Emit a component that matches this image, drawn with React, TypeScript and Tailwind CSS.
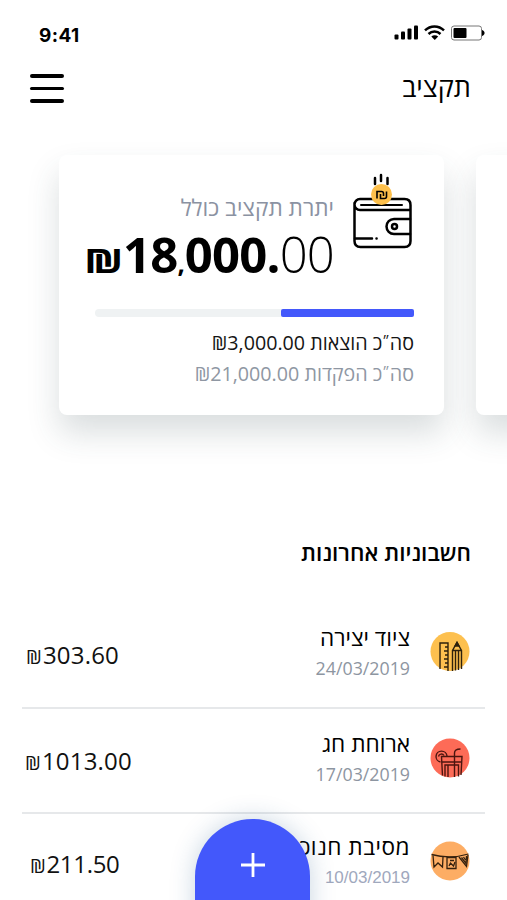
import type { ReactNode } from 'react'
import clsx from 'clsx'

type Invoice = {
  title: string
  date: string
  amount: string
  icon: ReactNode
  titleClass?: string
  dateClass: string
  amountClass: string
  rowClass: string
}

function StatusIcons() {
  return (
    <svg width="92" height="18" viewBox="0 0 92 18" fill="none">
      <g fill="#000">
        <rect x="1.5" y="10.5" width="4" height="5" rx="1" />
        <rect x="8" y="7.5" width="4" height="8" rx="1" />
        <rect x="14.5" y="4.500" width="4" height="11" rx="1" />
        <rect x="21" y="1.500" width="4" height="14" rx="1" />
      </g>
      <g stroke="#000" strokeWidth="2.5">
        <path d="M32 6.300c5.400-5.200 13.600-5.200 19 0" />
        <path d="M35.500 10c3.400-3.200 8.600-3.200 12 0" />
      </g>
      <path d="M38.300 12.500c2-1.600 4.900-1.600 6.900 0L41.750 16z" fill="#000" />
      <rect x="58.500" y="2" width="30" height="14" rx="2.500" stroke="#777" />
      <rect x="60.500" y="4" width="13" height="10" rx="1" fill="#000" />
      <path d="M89 6c3.400 1 3.400 5 0 6z" fill="#000" />
    </svg>
  )
}

function WalletIcon() {
  return (
    <svg width="60" height="76" viewBox="0 0 60 76" fill="none" stroke="#000" strokeWidth="2.500" strokeLinecap="round">
      <path d="M23 5v6M29 2v6M35.500 5v6" />
      <path d="M2.500 30v38q0 6 6 6h44q6 0 6-6V32q0-6-6-6H8a5.500 5.500 0 0 0 0 11h50" />
      <path d="M9 32h41" strokeWidth="2" />
      <path d="M58 46H42a7.500 7.500 0 0 0 0 15h16" />
      <circle cx="42.500" cy="53.500" r="2.500" />
      <path d="M3 65.500h17M24.500 65.500h.1" />
      <circle cx="29.500" cy="21.500" r="10.500" fill="#fdc04c" stroke="none" />
      <path d="M25 25.500v-7h4.500q2 0 2 2v2.500M28.500 21v4.500h4q2 0 2-2v-5" strokeWidth="1.600" strokeLinecap="butt" />
    </svg>
  )
}

function PencilIcon() {
  return (
    <svg width="40" height="40" viewBox="0 0 40 40" fill="none" stroke="#2e210c" strokeWidth="1.400">
      <circle cx="20" cy="19.500" r="19.500" fill="#fdc04f" stroke="none" />
      <path d="M10 37V11h8v28M18 15h-3M18 19h-4M18 23h-3M18 27h-4M18 31h-3M18 35h-4" />
      <path d="M22.500 39V18.500l4.500-8 4.500 8v18.500M22.500 18.500h9M25.500 19v19.500M28.500 19v19" />
      <path d="M25 14l2-3.500 2 3.500z" fill="#2e210c" />
    </svg>
  )
}

function DrinkIcon() {
  return (
    <svg width="40" height="40" viewBox="0 0 40 40" fill="none" stroke="#4c150f" strokeWidth="1.400">
      <circle cx="20" cy="20" r="19.500" fill="#fd6b57" stroke="none" />
      <path d="M10.500 24a5.500 5.500 0 1 1 6.500-6M8.500 18.500a3 3 0 0 1 5.500-1" />
      <path d="M12.500 37.500l-1-19h20.500l-1 18.500M12 24h19.500M15 38.500V27h13.500v11.500M18 39V27M24.500 39V15q0-4 6-4" />
    </svg>
  )
}

function BuntingIcon() {
  return (
    <svg width="40" height="40" viewBox="0 0 40 40" fill="none" stroke="#35210e" strokeWidth="1.300">
      <circle cx="20" cy="20" r="19.500" fill="#fdad64" stroke="none" />
      <path d="M1.500 13.500q18.500 5 37-.5" />
      <path d="M3 14.500l1 11.500 4-4 4.500 4 .5-10M17 16.500v11h9v-11zM29 16l7.500 9.500 1.500-11.500" />
      <path d="M20 19.500h4M19 25l1.500-3 3 3 1.500-4M31.500 16.500l4.500 6 .5-7.500M33.500 16l2 3" />
    </svg>
  )
}

const invoices: Invoice[] = [
  {
    title: 'ציוד יצירה',
    date: '24/03/2019',
    amount: '303.60',
    icon: <PencilIcon />,
    dateClass: 'text-[17.800px] text-[#8d95a1]',
    amountClass: 'pl-[4px] tracking-[0.2px]',
    rowClass: 'h-[107px] pt-[20px] border-b-2',
  },
  {
    title: 'ארוחת חג',
    date: '17/03/2019',
    amount: '1013.00',
    icon: <DrinkIcon />,
    dateClass: 'text-[17.800px] text-[#8d95a1]',
    amountClass: 'pl-[3px] tracking-[0.2px]',
    rowClass: 'h-[105px] pt-[19px] border-b-2',
  },
  {
    title: 'מסיבת חנוכה',
    date: '10/03/2019',
    amount: '211.50',
    icon: <BuntingIcon />,
    titleClass: 'tracking-[0.5px]',
    dateClass: 'pt-px font-["Liberation_Sans"] text-[17px] text-[#a0a8bd]',
    amountClass: 'pl-[8px] tracking-[-0.3px]',
    rowClass: 'h-[86px] pt-[17px]',
  },
]

function InvoiceRow({ invoice }: { invoice: Invoice }) {
  return (
    <div className={clsx('flex items-start border-[#e6e8ea]', invoice.rowClass)}>
      <div className={clsx('mt-[16px] text-[24px] leading-[34px] text-[#111]', invoice.amountClass)}>
        <span className="mr-px text-[20px]">₪</span>
        {invoice.amount}
      </div>
      <div className="ml-auto mr-[20px] text-right whitespace-nowrap">
        <div dir="rtl" className={clsx('h-[32px] text-[22.600px] leading-[32px] text-black', invoice.titleClass)}>
          {invoice.title}
        </div>
        <div className={clsx('h-[28px] leading-[28px]', invoice.dateClass)}>{invoice.date}</div>
      </div>
      <div className="mt-[10px] mr-[15px]">{invoice.icon}</div>
    </div>
  )
}

function TotalLine({ label, amount, className }: { label: string; amount: string; className: string }) {
  return (
    <p className={clsx('h-[30.500px]', className)}>
      סה<span className="align-[5px] text-[12.500px] leading-none">״</span>כ {label} {amount}
    </p>
  )
}

export default function App() {
  return (
    <div className='relative w-[507px] h-[900px] overflow-hidden bg-white font-["Open_Sans",sans-serif] text-black'>
      <div className="flex h-[58px] items-start justify-between pl-[39px] pr-[22px]">
        <span className='mt-[22px] font-["Inter"] text-[19px] leading-[28px] font-bold tracking-[0.4px]'>9:41</span>
        <div className="mt-[24px]">
          <StatusIcons />
        </div>
      </div>

      <header className="flex h-[97px] items-start justify-between pl-[30px] pr-[36px]">
        <div className="mt-[16px] flex flex-col gap-[9px]">
          <span className="h-[3.500px] w-[34px] rounded-full bg-black" />
          <span className="h-[3.500px] w-[34px] rounded-full bg-black" />
          <span className="h-[3.500px] w-[34px] rounded-full bg-black" />
        </div>
        <h1 dir="rtl" className="mt-[11px] text-[27px] leading-[36px]">תקציב</h1>
      </header>

      <div className="flex h-[260px] gap-[32px] pl-[59px]">
        <section className="flex h-[260px] w-[385px] shrink-0 flex-col rounded-lg bg-white shadow-[0_18px_32px_rgba(50,70,80,0.18)]">
          <div className="flex h-[154px] items-start justify-end pr-[32px]">
            <div className="mr-[18px] mt-[35px] text-right whitespace-nowrap">
              <div dir="rtl" className="h-[36px] text-[22.600px] leading-[36px] text-[#8b92a2]">יתרת תקציב כולל</div>
              <div className="h-[60px] text-[49px] leading-[56px] font-bold">
                <span className="inline-block origin-right scale-x-[1.26] text-[34px]">₪</span>
                <span className="tracking-[-0.8px]">18</span>
                <span className="text-[26px]">,</span>
                <span className="tracking-[-0.8px]">000.</span>
                <span className="font-light tracking-[-0.8px]">00</span>
              </div>
            </div>
            <div className="mt-[18px]">
              <WalletIcon />
            </div>
          </div>
          <div className="ml-[36px] flex h-[8px] w-[319px] justify-end rounded-sm bg-[#eff2f3]">
            <div className="w-[133px] rounded-[2px] bg-[#4358fb]" />
          </div>
          <div dir="rtl" className="mt-[11px] pr-[30px] text-[19.700px] leading-[30.500px] whitespace-nowrap">
            <TotalLine label="הוצאות" amount="₪3,000.00" className="text-[#151515]" />
            <TotalLine label="הפקדות" amount="₪21,000.00" className="text-[#8f97a3]" />
          </div>
        </section>
        <section className="h-[260px] w-[385px] shrink-0 rounded-lg bg-white shadow-[0_18px_32px_rgba(50,70,80,0.18)]" />
      </div>

      <h2 dir="rtl" className="mt-[121px] h-[66px] pr-[36px] text-[22.500px] leading-[34px] font-semibold">חשבוניות אחרונות</h2>

      <div className="px-[22px]">
        {invoices.map((invoice) => (
          <InvoiceRow key={invoice.date} invoice={invoice} />
        ))}
      </div>

      <button className="absolute left-[195px] top-[819px] flex h-[115px] w-[115px] justify-center rounded-full rounded-b-none bg-[#4358fb] pt-[34px] shadow-[0_0_25px_rgba(40,90,140,0.25)]">
        <svg width="24" height="24" viewBox="0 0 24 24" stroke="#fff" strokeWidth="2.800">
          <path d="M12 0v24M0 12h24" />
        </svg>
      </button>
    </div>
  )
}
